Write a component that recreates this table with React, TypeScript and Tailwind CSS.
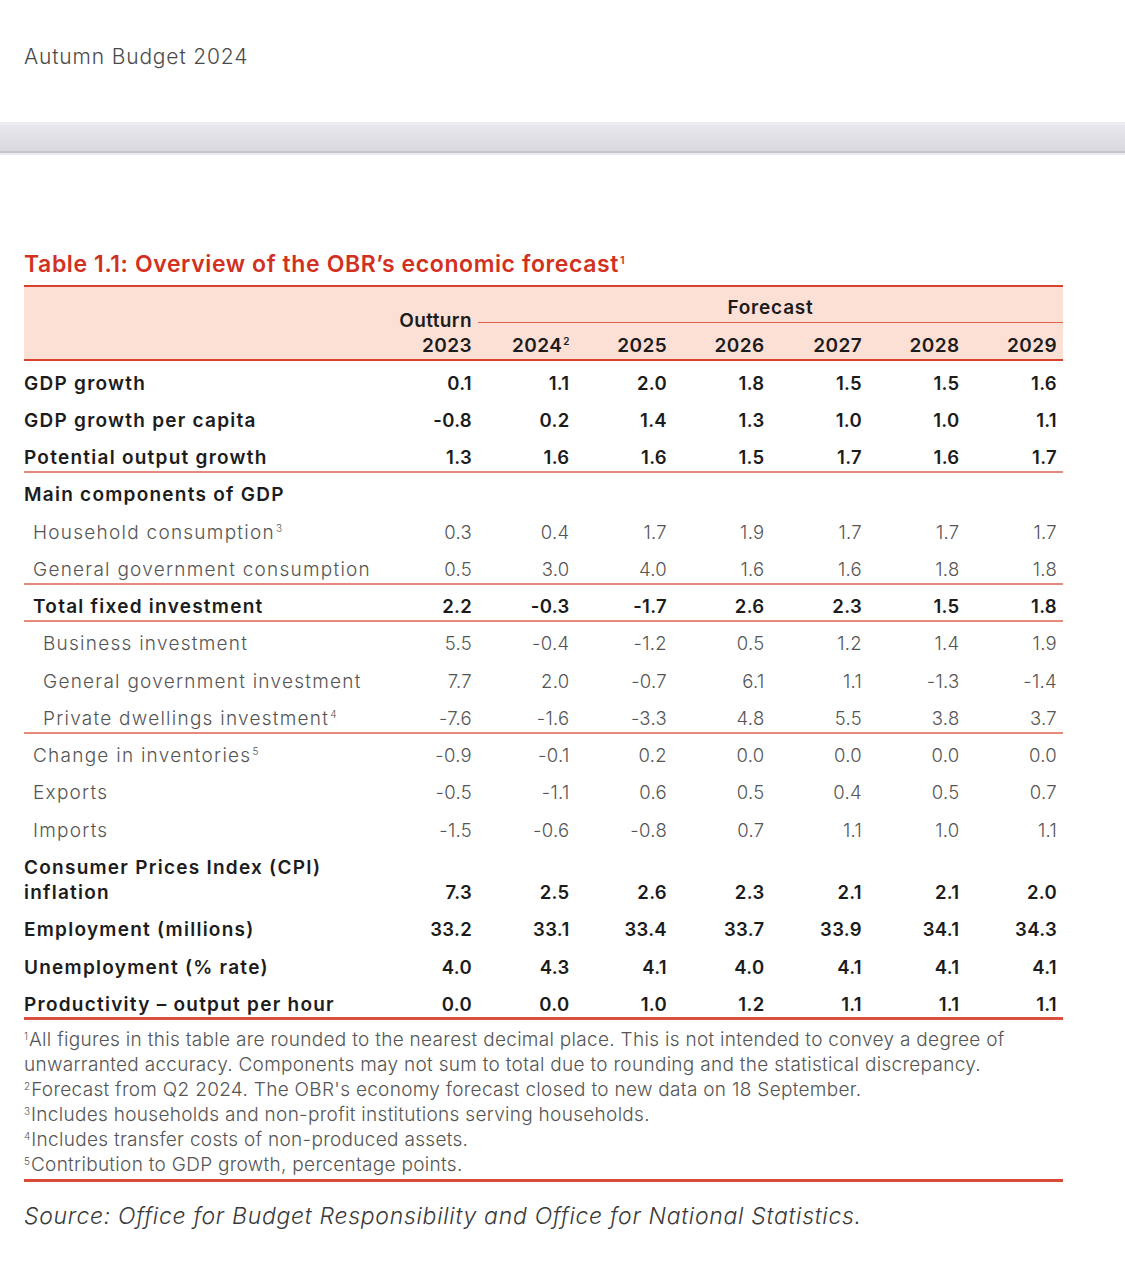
import React from "react";

type Row = {
  label: React.ReactNode;
  bold?: boolean;
  indent?: 0 | 1 | 2;
  vals?: string[];
  border?: "thin" | "thick";
  tall?: boolean;
};

const Sup = ({ n }: { n: string }) => (
  <span className="relative top-[-7px] text-[10px] leading-none ml-[1px] tracking-normal">{n}</span>
);

const rows: Row[] = [
  { label: "GDP growth", bold: true, vals: ["0.1", "1.1", "2.0", "1.8", "1.5", "1.5", "1.6"] },
  { label: "GDP growth per capita", bold: true, vals: ["-0.8", "0.2", "1.4", "1.3", "1.0", "1.0", "1.1"] },
  { label: "Potential output growth", bold: true, vals: ["1.3", "1.6", "1.6", "1.5", "1.7", "1.6", "1.7"], border: "thin" },
  { label: "Main components of GDP", bold: true },
  { label: <>Household consumption<Sup n="3" /></>, indent: 1, vals: ["0.3", "0.4", "1.7", "1.9", "1.7", "1.7", "1.7"] },
  { label: "General government consumption", indent: 1, vals: ["0.5", "3.0", "4.0", "1.6", "1.6", "1.8", "1.8"], border: "thin" },
  { label: "Total fixed investment", bold: true, indent: 1, vals: ["2.2", "-0.3", "-1.7", "2.6", "2.3", "1.5", "1.8"], border: "thin" },
  { label: "Business investment", indent: 2, vals: ["5.5", "-0.4", "-1.2", "0.5", "1.2", "1.4", "1.9"] },
  { label: "General government investment", indent: 2, vals: ["7.7", "2.0", "-0.7", "6.1", "1.1", "-1.3", "-1.4"] },
  { label: <>Private dwellings investment<Sup n="4" /></>, indent: 2, vals: ["-7.6", "-1.6", "-3.3", "4.8", "5.5", "3.8", "3.7"], border: "thin" },
  { label: <>Change in inventories<Sup n="5" /></>, indent: 1, vals: ["-0.9", "-0.1", "0.2", "0.0", "0.0", "0.0", "0.0"] },
  { label: "Exports", indent: 1, vals: ["-0.5", "-1.1", "0.6", "0.5", "0.4", "0.5", "0.7"] },
  { label: "Imports", indent: 1, vals: ["-1.5", "-0.6", "-0.8", "0.7", "1.1", "1.0", "1.1"] },
  { label: <>Consumer Prices Index (CPI)<br />inflation</>, bold: true, tall: true, vals: ["7.3", "2.5", "2.6", "2.3", "2.1", "2.1", "2.0"] },
  { label: "Employment (millions)", bold: true, vals: ["33.2", "33.1", "33.4", "33.7", "33.9", "34.1", "34.3"] },
  { label: "Unemployment (% rate)", bold: true, vals: ["4.0", "4.3", "4.1", "4.0", "4.1", "4.1", "4.1"] },
  { label: "Productivity – output per hour", bold: true, vals: ["0.0", "0.0", "1.0", "1.2", "1.1", "1.1", "1.1"], border: "thick" },
];

const footnotes: { n: string; text: string }[] = [
  { n: "1", text: "All figures in this table are rounded to the nearest decimal place. This is not intended to convey a degree of" },
  { n: "", text: "unwarranted accuracy. Components may not sum to total due to rounding and the statistical discrepancy." },
  { n: "2", text: "Forecast from Q2 2024. The OBR's economy forecast closed to new data on 18 September." },
  { n: "3", text: "Includes households and non-profit institutions serving households." },
  { n: "4", text: "Includes transfer costs of non-produced assets." },
  { n: "5", text: "Contribution to GDP growth, percentage points." },
];

export default function App() {
  return (
    <div
      className="w-[1125px] h-[1265px] bg-white overflow-hidden"
      style={{ fontFamily: "Inter, 'Open Sans', sans-serif" }}
    >
      {/* Top bar */}
      <div className="h-[122px] pl-[24px] pt-[44px]">
        <div className="text-[21px] leading-[26px] font-light text-[#4a4a4a] tracking-[0.85px]">Autumn Budget 2024</div>
      </div>
      <div className="h-[33px] flex flex-col">
        <div className="h-[3px] bg-[#eeeef2]" />
        <div className="flex-1 bg-gradient-to-b from-[#e7e7ed] to-[#d9d9df]" />
        <div className="h-[2px] bg-[#c4c4ca]" />
        <div className="h-[2px] bg-[#ebebee]" />
      </div>

      {/* Title */}
      <div className="pt-[95px] pl-[24px]">
        <div className="h-[28px] text-[23px] leading-[28px] font-semibold text-[#d2311f] tracking-[0.6px]">
          Table 1.1: Overview of the OBR’s economic forecast
          <span className="relative top-[-8px] text-[11px] leading-none ml-[1px]">1</span>
        </div>
      </div>

      {/* Table */}
      <div className="ml-[24px] mt-[7px] w-[1039px]">
        {/* Header */}
        <div className="h-[76px] bg-[#fce0d6] border-t-2 border-b-2 border-[#d9412e] grid grid-cols-[356.5px_97.5px_1fr] text-[19px] font-semibold text-[#1c1c1c] tracking-[0.4px]">
          <div />
          <div className="flex flex-col items-end pr-[6px] pt-[20.5px]">
            <div className="h-[25px] leading-[25px]">Outturn</div>
            <div className="h-[25px] leading-[25px]">2023</div>
          </div>
          <div className="flex flex-col">
            <div className="h-[36px] border-b-[1.5px] border-[#e0604e] text-center pt-[7.5px] leading-[25px] tracking-[0.8px]">Forecast</div>
            <div className="grid grid-cols-6 pt-[9.5px]">
              {["2024", "2025", "2026", "2027", "2028", "2029"].map((y, i) => (
                <div key={y} className="h-[25px] text-right pr-[6px] leading-[25px]">
                  {y}
                  {i === 0 && <Sup n="2" />}
                </div>
              ))}
            </div>
          </div>
        </div>

        {/* Body */}
        {rows.map((r, idx) => {
          const h = r.tall ? "h-[62.5px]" : "h-[37.25px]";
          const bd =
            r.border === "thin"
              ? "border-b-2 border-[#e8897b]"
              : r.border === "thick"
              ? "border-b-[3px] border-[#d9503e]"
              : "";
          const txt = r.bold ? "font-semibold text-[#1c1c1c]" : "font-light text-[#555555]";
          const ind = r.indent === 2 ? "pl-[19px]" : r.indent === 1 ? "pl-[9px]" : "pl-0";
          return (
            <div
              key={idx}
              className={`grid grid-cols-[356.5px_repeat(7,97.5px)] ${h} ${bd} ${txt}`}
            >
              <div className={`pt-[9.5px] leading-[25px] text-[19px] tracking-[1.25px] whitespace-nowrap ${ind}`}>{r.label}</div>
              {(r.vals ?? ["", "", "", "", "", "", ""]).map((v, i) => (
                <div
                  key={i}
                  className={`text-right pr-[6px] leading-[25px] text-[18.5px] tracking-[0.3px] ${r.tall ? "pt-[34.5px]" : "pt-[9.5px]"}`}
                >
                  {v}
                </div>
              ))}
            </div>
          );
        })}

        {/* Footnotes */}
        <div className="pt-[7px] pb-[2px] border-b-[3px] border-[#d94a37]">
          {footnotes.map((f, i) => (
            <div key={i} className="h-[25px] leading-[25px] whitespace-nowrap text-[19px] tracking-[0.3px] font-light text-[#555555]">
              {f.n && <span className="relative top-[-6px] text-[10px] leading-none mr-[1px] tracking-normal">{f.n}</span>}
              {f.text}
            </div>
          ))}
        </div>

        {/* Source */}
        <div className="pt-[20px] text-[23px] leading-[28px] italic font-light text-[#3a3a3a] tracking-[0.7px]">
          Source: Office for Budget Responsibility and Office for National Statistics.
        </div>
      </div>
    </div>
  );
}
